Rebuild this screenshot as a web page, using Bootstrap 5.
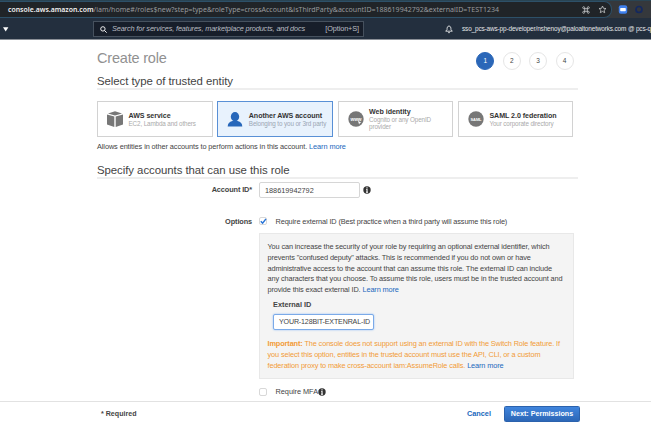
<!DOCTYPE html>
<html lang="en">
<head>
<meta charset="utf-8">
<title>Create role</title>
<meta name="viewport" content="width=device-width, initial-scale=1">
<link href="https://cdn.jsdelivr.net/npm/bootstrap@5.3.0/dist/css/bootstrap.min.css" rel="stylesheet">
<style>
body{font-family:"Liberation Sans",Arial,sans-serif;font-size:7.35px;line-height:10.65px;letter-spacing:-.12px;color:#444;height:433px;overflow:hidden;background:#fff}
a{color:#2268bd;text-decoration:none}
svg{display:block;flex:none}
.chrome{height:18px;background:#35383c;border-top:1px solid #294453;color:#989b9e}
.omni{width:612px;height:17px;background:#202428;border:1px solid #2d5068;border-left:0;border-radius:0 8px 8px 0;padding-left:8px;font:7.02px "Noto Sans",sans-serif;line-height:15px;letter-spacing:0}
.omni b{color:#f2f2f2;font-weight:600;font-size:6.9px}
.console-bar{height:22px;background:#232f3e;border-bottom:1px solid #8b9097;color:#e4e6e8;padding-top:1px}
.caret{margin-left:3px}
.find{flex:none;width:271px;height:16px;margin-left:84px;background:#171e2a;border:1px solid #46515e;padding:0 4px 0 6px;color:#b9bdc3}
.find i{font-size:7.3px;margin-left:5px}
.bell{margin-left:81px}
.user{margin-left:9px;font-size:6.4px}
.page{margin-left:97px;width:481px}
.title{font-size:14.5px;line-height:18px;letter-spacing:-.2px;color:#919191;margin:9px 0 0;font-weight:400}
.steps{padding-top:12px;gap:8.4px;margin-right:4.5px}
.step{width:18px;height:18px;border:1px solid #e6e6e6;font-size:6.5px;border-radius:50%}
.step.on{background:#2b67b8;border-color:#2b67b8;color:#fff}
.section-title{font-size:11.4px;line-height:14px;letter-spacing:-.05px;margin:0;color:#444;font-weight:400;border-bottom:2px solid #eee}
.choices{gap:4.8px;padding-top:10px}
.choice{width:115.5px;height:36px;border:1px solid #d2d2d2;padding-left:9px}
.choice.on{background:#e8f2fd;border-color:#5990d6}
.choice svg{margin-right:5.5px}
.choice b{color:#333;font-size:7.1px;line-height:8px;letter-spacing:-.05px;display:block}
.choice small{font-size:6.3px;line-height:7px;color:#aaa;display:block}
.choice.on small{color:#9aa6b4}
.lab{width:155px;margin-right:7px;text-align:right;font-weight:700}
.entry{width:101px;height:16px;border:1px solid #d6d6d6;border-radius:2px;padding:1px 5px 0;font-size:7.3px;letter-spacing:0;color:#444;background:#fff;outline:0}
.entry.focus{border-color:#7baae8;box-shadow:0 0 2px #8ab8f5;letter-spacing:-.16px;font-size:7.1px}
.check{width:8px;height:8px;border:1px solid #d8d8d8;border-radius:2px;background:#fff;margin-right:8.5px}
.note{margin:7px 0 0 162px;width:315px;height:146px;background:#f4f4f4;border:1px solid #e8e8e8;padding:8px 0 0 7.5px;white-space:nowrap}
.warn{color:#f29b36;margin-top:9px}
.foot{height:31px;border-top:1px solid #e2e2e2;background:#fff;padding:0 71px 7px 101px;letter-spacing:0}
.next{width:76px;height:16px;border:1px solid #2b62ad;border-radius:1.5px;background:linear-gradient(#4085dd,#2c67b7);color:#fff;font-size:7.15px;font-weight:700;line-height:15px;padding:0}
</style>
<script src="https://cdn.jsdelivr.net/npm/bootstrap@5.3.0/dist/js/bootstrap.bundle.min.js"></script>
</head>
<body>
<svg width="0" height="0" class="position-absolute"><symbol id="info" viewBox="0 0 8 8"><circle cx="4" cy="4" r="3.7" fill="#333"/><path d="M4 1.3v1.2M3.2 3.5H4v2.6M3 6.2h2" stroke="#fff" stroke-width="1.1"/></symbol></svg>
<div class="chrome d-flex align-items-center">
  <div class="omni d-flex align-items-center text-nowrap">
    <span><b>console.aws.amazon.com</b>/iam/home#/roles$new?step=type&amp;roleType=crossAccount&amp;isThirdParty&amp;accountID=188619942792&amp;externalID=TEST1234</span>
    <svg class="ms-auto" width="8" height="8" viewBox="0 0 8 8" fill="none" stroke="#c8cacc" stroke-width=".8"><path d="M2.7 1.7v4.6M5.3 1.7v4.6M1.7 2.7h4.6M1.7 5.3h4.6"/><path d="M2.7 1.7a1 1 0 1 0-1 1M5.3 1.7a1 1 0 1 1 1 1M2.7 6.3a1 1 0 1 1-1-1M5.3 6.3a1 1 0 1 0 1-1"/></svg>
    <svg class="ms-2 me-1" width="9" height="9" viewBox="0 0 9 9" fill="none" stroke="#c8cacc" stroke-width=".8"><path d="M4.5 1l1 2.3 2.5.2-1.9 1.7.6 2.5-2.2-1.3-2.2 1.3.6-2.5L1 3.5l2.5-.2z"/></svg>
  </div>
  <svg width="32" height="9" viewBox="0 0 32 9"><rect x="6.8" y=".3" width="8.4" height="8.4" rx="2" fill="#3f80ed"/><rect x="8.2" y="3" width="5.6" height="3.2" rx=".7" fill="#fff"/><circle cx="27" cy="4.5" r="3" fill="none" stroke="#14285f" stroke-width="1.7"/></svg>
</div>
<div class="console-bar d-flex align-items-center text-nowrap">
  <svg class="caret" width="6" height="5" viewBox="0 0 6 5"><path d="M0 .3h5.4L2.7 4.6z" fill="#fff"/></svg>
  <div class="find d-flex align-items-center">
    <svg width="7" height="7" viewBox="0 0 7 7" fill="none" stroke="#eee" stroke-width="1"><circle cx="2.9" cy="2.9" r="2.2"/><path d="M4.5 4.5l2.2 2.2"/></svg>
    <i>Search for services, features, marketplace products, and docs</i><span class="ms-auto">[Option+S]</span>
  </div>
  <svg class="bell" width="8" height="9" viewBox="0 0 8 9" fill="none" stroke="#e4e6e8" stroke-width=".9"><path d="M.7 6.2h6.6L6 4.7C6 2.5 5.5 1 4 1S2 2.5 2 4.7zM3.1 7.4q.9 1 1.8 0"/></svg>
  <span class="user">sso_pcs-aws-pp-developer/nshenoy@paloaltonetworks.com @ pcs-q</span>
</div>
<main class="page">
  <div class="d-flex justify-content-between">
    <h1 class="title">Create role</h1>
    <div class="steps d-flex">
      <span class="step on d-flex align-items-center justify-content-center">1</span><span class="step d-flex align-items-center justify-content-center">2</span><span class="step d-flex align-items-center justify-content-center">3</span><span class="step d-flex align-items-center justify-content-center">4</span>
    </div>
  </div>
  <h2 class="section-title mt-1 pt-0">Select type of trusted entity</h2>
  <div class="choices d-flex" style="padding-top:11px">
    <div class="choice d-flex align-items-center">
      <svg width="16" height="16" viewBox="0 0 16 16" fill="#777"><path d="M0 3.4l7.3 2.1V16L0 13.6zM16 3.4L8.7 5.5V16l7.3-2.4zM1 2.4L8 .2l7 2.2-7 2z"/></svg>
      <div><b>AWS service</b><small>EC2, Lambda and others</small></div>
    </div>
    <div class="choice on d-flex align-items-center">
      <svg width="16" height="15" viewBox="0 0 16 15" fill="#2767ba"><ellipse cx="8" cy="4.8" rx="4.2" ry="4.7"/><path d="M.7 14.5q0-4.6 4.7-5.6h5.2q4.7 1 4.7 5.6z"/></svg>
      <div class="text-nowrap"><b>Another AWS account</b><small>Belonging to you or 3rd party</small></div>
    </div>
    <div class="choice d-flex align-items-center">
      <svg width="16" height="16" viewBox="0 0 16 16"><circle cx="8" cy="8" r="7.7" fill="#777"/><text x="8" y="9.5" font-size="4.8" font-weight="700" fill="#fff" text-anchor="middle">www</text><path d="M10 9.7l3.3 2.1-1.4.3-.8 1.4z" fill="#fff"/></svg>
      <div><b>Web identity</b><small>Cognito or any OpenID<br>provider</small></div>
    </div>
    <div class="choice d-flex align-items-center">
      <svg width="16" height="16" viewBox="0 0 16 16"><circle cx="8" cy="8" r="7.7" fill="#777"/><text x="8" y="9.5" font-size="4" font-weight="700" fill="#fff" text-anchor="middle">SAML</text></svg>
      <div class="text-nowrap"><b>SAML 2.0 federation</b><small>Your corporate directory</small></div>
    </div>
  </div>
  <div style="padding-top:5px;letter-spacing:-.09px">Allows entities in other accounts to perform actions in this account. <a href="#">Learn more</a></div>
  <h2 class="section-title" style="margin-top:10px">Specify accounts that can use this role</h2>
  <div class="d-flex align-items-center" style="margin-top:3px">
    <label class="lab" for="acct" style="padding-top:2px">Account ID*</label><input id="acct" class="entry" value="188619942792"><svg width="8" height="8" style="margin-left:2.5px"><use href="#info"/></svg>
  </div>
  <div class="d-flex align-items-center" style="margin-top:18px">
    <span class="lab" style="padding-top:1px">Options</span><span class="check"><svg width="8" height="7" viewBox="0 0 8 7"><path d="M.8 3.3l1.8 1.9L6 .9" stroke="#2874d8" stroke-width="1.5" fill="none"/></svg></span><span style="padding-top:1px">Require external ID (Best practice when a third party will assume this role)</span>
  </div>
  <div class="note" style="margin-top:6px">
    <div>You can increase the security of your role by requiring an optional external identifier, which</div>
    <div>prevents "confused deputy" attacks. This is recommended if you do not own or have</div>
    <div>administrative access to the account that can assume this role. The external ID can include</div>
    <div>any characters that you choose. To assume this role, users must be in the trusted account and</div>
    <div>provide this exact external ID. <a href="#">Learn more</a></div>
    <div style="margin:4px 0 0 5.5px;letter-spacing:0"><b>External ID</b><div class="entry focus d-flex align-items-center" style="margin-top:4px">YOUR-128BIT-EXTENRAL-ID</div></div>
    <div class="warn">
      <div><b>Important:</b> The console does not support using an external ID with the Switch Role feature. If</div>
      <div>you select this option, entities in the trusted account must use the API, CLI, or a custom</div>
      <div>federation proxy to make cross-account iam:AssumeRole calls. <a href="#">Learn more</a></div>
    </div>
  </div>
  <div class="d-flex align-items-center" style="margin:7px 0 4px 162px;letter-spacing:-.03px"><span class="check"></span><span style="padding-top:1px;line-height:10px">Require MFA</span><svg width="8" height="8"><use href="#info"/></svg></div>
</main>
<footer class="foot d-flex align-items-center">
  <b style="padding-top:2px;font-size:7.1px">* Required</b><a href="#" class="ms-auto fw-bold" style="margin-right:13px;padding-top:2px">Cancel</a><button class="btn next">Next: Permissions</button>
</footer>
</body>
</html>
